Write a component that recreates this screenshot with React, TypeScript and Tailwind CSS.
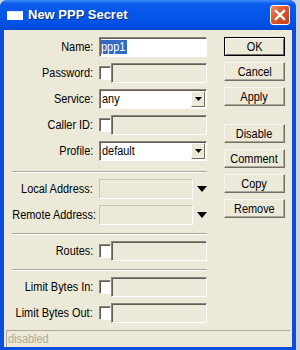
import React from "react";

const FONT = "font-[family-name:'Liberation_Sans',Arial,sans-serif]";

const sunken =
  "border border-t-[#8a877a] border-l-[#8a877a] border-r-white border-b-white shadow-[inset_1px_1px_0_#5f5d55]";

function T({
  children,
  origin = "origin-center",
}: {
  children: React.ReactNode;
  origin?: string;
}) {
  return <span className={`inline-block scale-x-[0.91] ${origin} whitespace-nowrap`}>{children}</span>;
}

function Label({ children }: { children: React.ReactNode }) {
  return (
    <div className="w-[89px] shrink-0 text-right text-[12px] leading-[14px] text-black whitespace-nowrap">
      <T origin="origin-right">{children}</T>
    </div>
  );
}

function Row({
  label,
  children,
  className = "mt-[6px]",
}: {
  label: string;
  children: React.ReactNode;
  className?: string;
}) {
  return (
    <div className={`flex items-center h-[20px] ${className}`}>
      <Label>{label}</Label>
      <div className="ml-[6px] flex items-center h-full">{children}</div>
    </div>
  );
}

function CheckField() {
  return (
    <div className="flex items-center h-full">
      <div className={`w-[12px] h-[14px] bg-white ${sunken}`} />
      <div className={`w-[96px] h-[20px] bg-[#ECE9D8] ${sunken}`} />
    </div>
  );
}

function SelectBox({ value }: { value: string }) {
  return (
    <div className={`w-[108px] h-[20px] bg-white flex items-center ${sunken}`}>
      <div className="flex-1 pl-[2px] text-[12px] leading-[14px] text-black">
        <T origin="origin-left">{value}</T>
      </div>
      <div className="w-[14px] h-[16px] mr-[1px] bg-[#ECE9D8] border border-t-white border-l-white border-r-[#716f64] border-b-[#716f64] flex items-center justify-center">
        <svg width="7" height="4" viewBox="0 0 7 4">
          <path d="M0 0h7L3.5 4z" fill="#000" />
        </svg>
      </div>
    </div>
  );
}

function AddrField() {
  return (
    <div className="flex items-center h-full">
      <div className="w-[94px] h-[20px] bg-[#ECE9D8] border border-[#c9c6b8] border-r-white border-b-white" />
      <svg width="10" height="6" viewBox="0 0 10 6" className="ml-[4px]">
        <path d="M0 0h10L5 6z" fill="#000" />
      </svg>
    </div>
  );
}

function Sep({ className }: { className: string }) {
  return <div className={`ml-[8px] h-[2px] border-t border-t-[#ACA899] border-b border-b-white ${className}`} />;
}

function Btn({ children, def = false, className = "" }: { children: React.ReactNode; def?: boolean; className?: string }) {
  return (
    <div
      className={`h-[19px] w-[61px] flex items-center justify-center text-[12px] leading-[14px] text-black bg-[#ECE9D8] border ${
        def
          ? "border-black shadow-[inset_1px_1px_0_#fff,inset_-1px_-1px_0_#716f64]"
          : "border-t-[#f6f5ef] border-l-[#f6f5ef] border-r-[#716f64] border-b-[#716f64] shadow-[inset_-1px_-1px_0_#aca899]"
      } ${className}`}
    >
      <T>{children}</T>
    </div>
  );
}

export default function App() {
  return (
    <div className={`w-[300px] h-[350px] bg-[#cdd5e2] ${FONT}`}>
      <div className="w-[296px] h-[350px] flex flex-col rounded-t-[7px] bg-[#0a4fdc] overflow-hidden">
        {/* Title bar */}
        <div className="h-[30px] shrink-0 flex items-center bg-[linear-gradient(#3d8ff6_0%,#0c5cee_12%,#0456e8_50%,#0150e3_85%,#0046d2_100%)]">
          <div className="ml-[7px] w-[16px] h-[9px] bg-white border-t border-[#dfe9ff] mt-[1px]" />
          <div className="ml-[5px] text-white font-bold text-[13px] leading-[16px] [text-shadow:1px_1px_0_#0a2a8a]">
            New PPP Secret
          </div>
          <div className="ml-auto mr-[6px] w-[20px] h-[20px] rounded-[3px] border border-white bg-[linear-gradient(135deg,#ef8a63,#d9532b_50%,#c63d17)] flex items-center justify-center">
            <svg width="12" height="12" viewBox="0 0 12 12">
              <path d="M2 2L10 10M10 2L2 10" stroke="#fff" strokeWidth="2.4" strokeLinecap="square" />
            </svg>
          </div>
        </div>

        {/* Body */}
        <div className="flex-1 mx-[4px] mb-[3px] bg-[#ECE9D8] flex flex-col">
          <div className="flex-1 flex">
            {/* Form */}
            <div className="w-[203px] pt-[7px] flex flex-col">
              <Row label="Name:" className="">
                <div className={`w-[108px] h-[20px] bg-white flex items-center ${sunken}`}>
                  <span className="ml-[1px] w-[26px] bg-[#316AC5] text-white text-[12px] leading-[14px] overflow-hidden">
                    <T origin="origin-left">ppp1</T>
                  </span>
                </div>
              </Row>
              <Row label="Password:">
                <CheckField />
              </Row>
              <Row label="Service:">
                <SelectBox value="any" />
              </Row>
              <Row label="Caller ID:">
                <CheckField />
              </Row>
              <Row label="Profile:">
                <SelectBox value="default" />
              </Row>
              <Sep className="mt-[10px]" />
              <Row label="Local Address:">
                <AddrField />
              </Row>
              <Row label="Remote Address:">
                <AddrField />
              </Row>
              <Sep className="mt-[8px]" />
              <Row label="Routes:">
                <CheckField />
              </Row>
              <Sep className="mt-[8px]" />
              <Row label="Limit Bytes In:">
                <CheckField />
              </Row>
              <Row label="Limit Bytes Out:">
                <CheckField />
              </Row>
            </div>

            {/* Buttons */}
            <div className="ml-[17px] pt-[7px] flex flex-col">
              <Btn def>OK</Btn>
              <Btn className="mt-[6px]">Cancel</Btn>
              <Btn className="mt-[6px]">Apply</Btn>
              <Btn className="mt-[18px]">Disable</Btn>
              <Btn className="mt-[6px]">Comment</Btn>
              <Btn className="mt-[6px]">Copy</Btn>
              <Btn className="mt-[6px]">Remove</Btn>
            </div>
          </div>

          {/* Status bar */}
          <div className="h-[17px] shrink-0 mx-[2px] border-t border-l border-[#ACA899] flex items-center">
            <span className="pl-[1px] text-[12px] leading-[14px] text-[#ACA899]">
              <T origin="origin-left">disabled</T>
            </span>
          </div>
        </div>
      </div>
    </div>
  );
}
